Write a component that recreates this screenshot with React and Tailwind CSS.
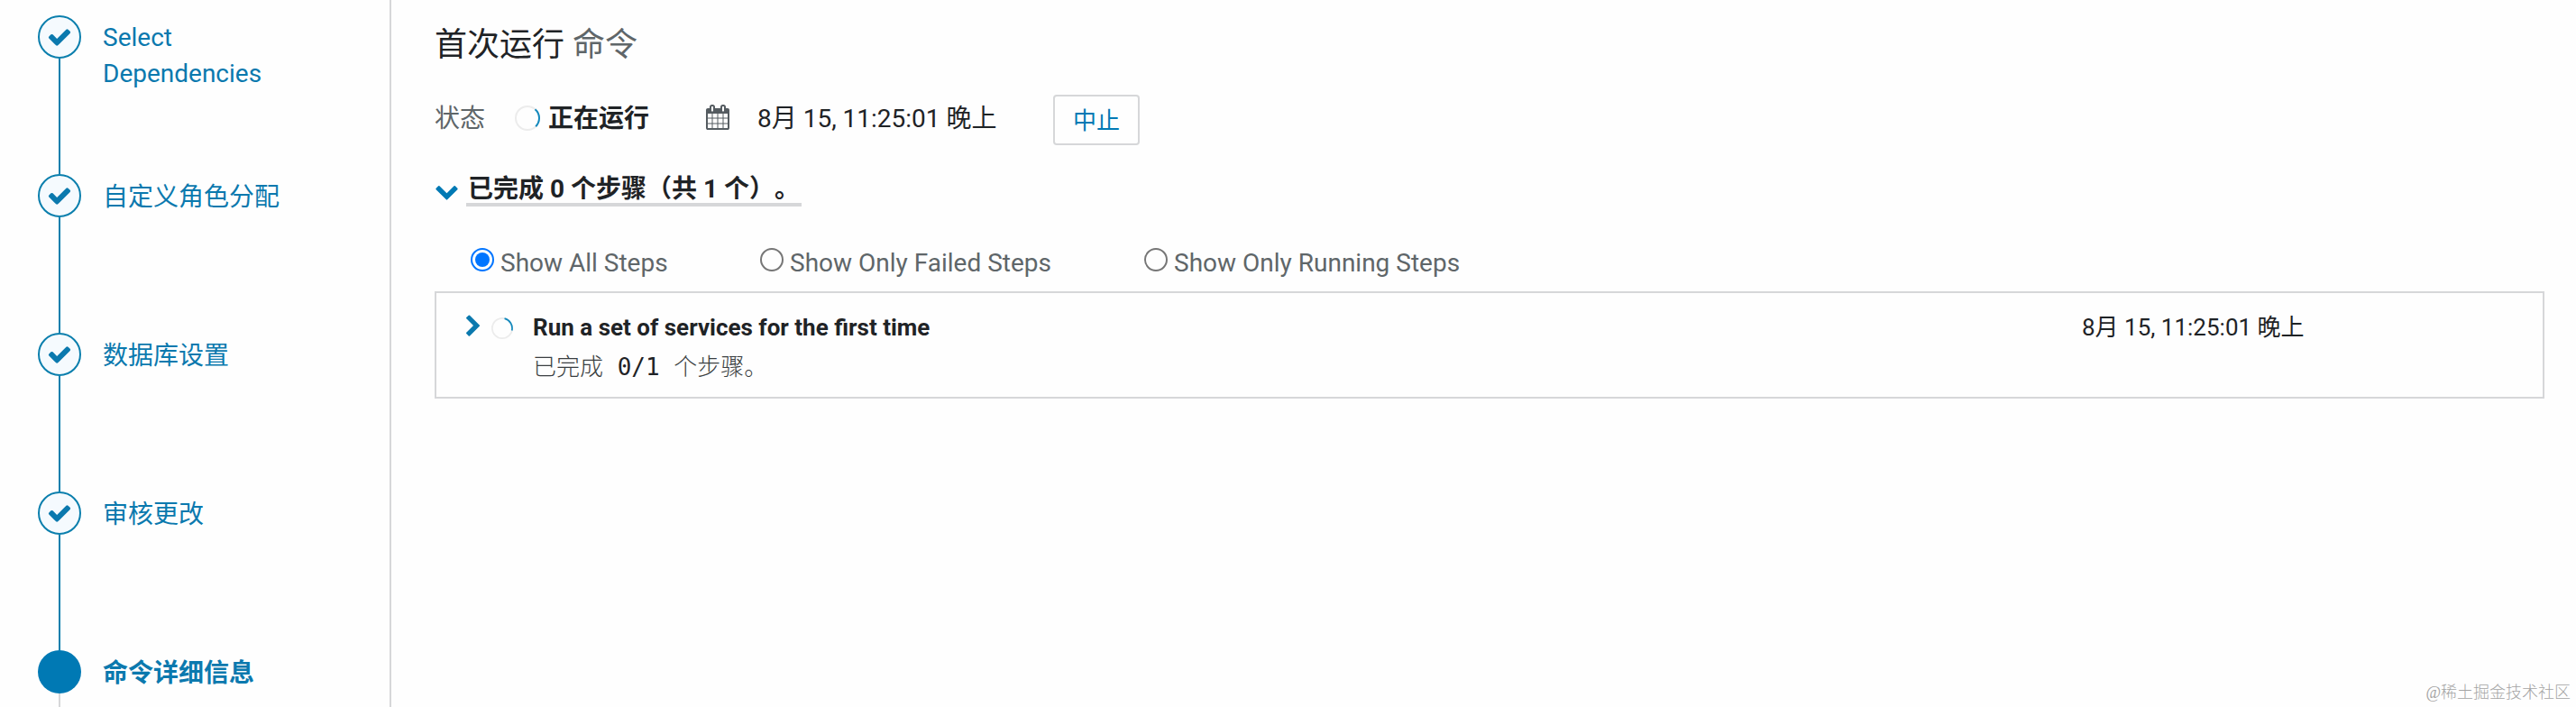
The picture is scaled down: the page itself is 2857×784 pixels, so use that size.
const CHECK =
  "M1671 566q0 40-28 68l-724 724-136 136q-28 28-68 28t-68-28l-136-136-362-362q-28-28-28-68t28-68l136-136q28-28 68-28t68 28l294 295 656-657q28-28 68-28t68 28l136 136q28 28 28 68z";
const CALENDAR =
  "M192 1664h288v-288h-288v288zm352 0h320v-288h-320v288zm-352-352h288v-320h-288v320zm352 0h320v-320h-320v320zm-352-384h288v-288h-288v288zm736 736h320v-288h-320v288zm-384-736h320v-288h-320v288zm768 736h288v-288h-288v288zm-384-352h320v-320h-320v320zm-352-864v-288q0-13-9.5-22.5t-22.5-9.5h-64q-13 0-22.5 9.5t-9.5 22.5v288q0 13 9.5 22.5t22.5 9.5h64q13 0 22.5-9.5t9.5-22.5zm736 864h288v-320h-288v320zm-384-384h320v-288h-320v288zm384 0h288v-288h-288v288zm32-480v-288q0-13-9.5-22.5t-22.5-9.5h-64q-13 0-22.5 9.5t-9.5 22.5v288q0 13 9.5 22.5t22.5 9.5h64q13 0 22.5-9.5t9.5-22.5zm384-64v1280q0 52-38 90t-90 38h-1408q-52 0-90-38t-38-90v-1280q0-52 38-90t90-38h128v-96q0-66 47-113t113-47h64q66 0 113 47t47 113v96h384v-96q0-66 47-113t113-47h64q66 0 113 47t47 113v96h128q52 0 90 38t38 90z";
const CHEVRON_DOWN =
  "M1683 808l-742 741q-19 19-45 19t-45-19l-742-741q-19-19-19-45.5t19-45.5l166-165q19-19 45-19t45 19l531 531 531-531q19-19 45-19t45 19l166 165q19 19 19 45.5t-19 45.5z";
const CHEVRON_RIGHT =
  "M1363 877l-742 742q-19 19-45 19t-45-19l-166-166q-19-19-19-45t19-45l531-531-531-531q-19-19-19-45t19-45l166-166q19-19 45-19t45 19l742 742q19 19 19 45t-19 45z";

function Glyph({ d, className }) {
  return (
    <svg viewBox="0 0 1792 1792" fill="currentColor" className={className}>
      <path d={d} />
    </svg>
  );
}

const STEPS = [
  { label: "Select Dependencies", done: true, text: "pt-[5px]" },
  { label: "自定义角色分配", done: true, text: "pt-1.5" },
  { label: "数据库设置", done: true, text: "pt-1.5" },
  { label: "审核更改", done: true, text: "pt-1.5" },
  { label: "命令详细信息", done: false, text: "pt-1.5 font-bold" },
];

function Step({ label, done, text }) {
  return (
    <li className="flex h-[176px] shrink-0 gap-6">
      <div className="flex w-12 shrink-0 flex-col items-center">
        {done ? (
          <div className="flex size-12 shrink-0 items-center justify-center rounded-full border-2 border-[#0b7fad] bg-[#f5fafe]">
            <Glyph d={CHECK} className="size-7" />
          </div>
        ) : (
          <div className="size-12 shrink-0 rounded-full bg-[#0079b4]" />
        )}
        <div className={done ? "w-0.5 grow bg-[#0b7fad]" : "w-0.5 grow bg-[#d6d7d9]"} />
      </div>
      <div className={`w-[200px] leading-10 ${text}`}>{label}</div>
    </li>
  );
}

function Spinner({ className, arc }) {
  return (
    <svg viewBox="0 0 28 28" fill="none" className={className}>
      <circle cx="14" cy="14" r="13" stroke="#ececec" strokeWidth="2" />
      <path d={arc} stroke="#1389bd" strokeWidth="2" />
    </svg>
  );
}

function Radio({ label, checked, className }) {
  return (
    <label className={className}>
      {checked ? (
        <span className="flex size-[26px] items-center justify-center rounded-full border-2 border-[#0075ff]">
          <span className="size-4 rounded-full bg-[#0075ff]" />
        </span>
      ) : (
        <span className="size-[26px] rounded-full border-2 border-[#767676]" />
      )}
      <span className="pt-px">{label}</span>
    </label>
  );
}

export default function App() {
  return (
    <div className="flex h-[784px] w-[2857px] overflow-hidden bg-[#fefefe] font-[Roboto,'Noto_Sans_CJK_SC',sans-serif] text-[28px] text-[#1f2326]">
      <aside className="w-[434px] shrink-0 overflow-hidden border-r-2 border-[#d6d7d9] pl-[42px] pt-[17px] text-[#0b79ae]">
        <ol className="flex flex-col">
          {STEPS.map((s) => (
            <Step key={s.label} {...s} />
          ))}
        </ol>
      </aside>

      <main className="flex grow flex-col pl-12 pr-[35px]">
        <h1 className="mt-[26px] flex gap-[9px] text-[36px] leading-[48px]">
          <span>首次运行</span>
          <span className="text-[#5f6669]">命令</span>
        </h1>

        <div className="mt-[31px] flex h-14 items-center leading-10">
          <span className="w-[89px] -translate-y-px text-[#5f6669]">状态</span>
          <Spinner className="mr-[9px] size-7 -translate-y-0.5" arc="M22.5 4.2A13 13 0 0 1 23.2 23.2" />
          <span className="w-[174px] -translate-y-px font-bold">正在运行</span>
          <Glyph d={CALENDAR} className="mr-[30px] size-7 -translate-y-[3px] text-[#555c61]" />
          <span className="w-[328px] -translate-y-px">8月 15, 11:25:01 晚上</span>
          <button className="h-14 w-24 rounded border-2 border-[#d6d7d9] pt-px text-[26px] text-[#0079b4]">
            中止
          </button>
        </div>

        <div className="mt-6 flex h-11 gap-2 text-[#0079b4]">
          <Glyph d={CHEVRON_DOWN} className="mt-[13px] size-[27px]" />
          <span className="h-11 w-[372px] whitespace-nowrap border-b-4 border-[#d6d7d9] pl-0.5 font-bold leading-[49px] text-[#1f2326] [text-spacing-trim:space-all]">
            已完成 0 个步骤（共 1 个）。
          </span>
        </div>

        <div className="mt-[46px] flex h-12 pl-10 leading-8 text-[#5f6669]">
          <Radio checked label="Show All Steps" className="flex w-[321px] gap-[7px]" />
          <Radio label="Show Only Failed Steps" className="flex w-[426px] gap-[7px]" />
          <Radio label="Show Only Running Steps" className="flex gap-[7px]" />
        </div>

        <section className="flex h-[119px] border-2 border-[#d6d7d9] pl-7 pt-[17px] text-[26px] leading-[42px]">
          <Glyph d={CHEVRON_RIGHT} className="mt-[7px] size-[26px] text-[#0b79ae]" />
          <Spinner className="ml-[7px] mt-2.5 size-6" arc="M17 1.4A13 13 0 0 1 26.5 17" />
          <div className="ml-[22px] w-[1718px]">
            <div className="font-bold">Run a set of services for the first time</div>
            <div className="whitespace-pre pt-0.5 font-['DejaVu_Sans_Mono','Noto_Sans_CJK_SC',monospace] font-light text-[#3a3e41]">
              已完成 <span className="text-[#1f2326]">0/1</span> 个步骤。
            </div>
          </div>
          <time>8月 15, 11:25:01 晚上</time>
        </section>

        <footer className="-mr-[29px] mt-auto pb-1 text-right font-['Liberation_Serif','Noto_Sans_CJK_SC',serif] text-[18px] font-light leading-6 text-[#a4a4a4]">
          @稀土掘金技术社区
        </footer>
      </main>
    </div>
  );
}
